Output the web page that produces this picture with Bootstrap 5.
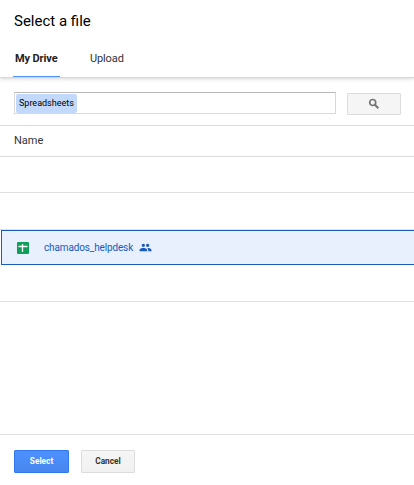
<!DOCTYPE html>
<html lang="en">
<head>
<meta charset="utf-8">
<meta name="viewport" content="width=device-width, initial-scale=1">
<title>Select a file</title>
<link href="https://cdn.jsdelivr.net/npm/bootstrap@5.3.0/dist/css/bootstrap.min.css" rel="stylesheet">
<style>
body{font-family:Roboto,"Liberation Sans",sans-serif;font-size:11px;color:#333;height:485px}
.picker-head{height:78px;border-bottom:1px solid #d6d6d6;box-shadow:0 1px 4px rgba(0,0,0,.16)}
.picker-title{font-size:15px;line-height:20px;color:#000;padding:11px 14px 0;margin:0;font-weight:400}
.picker-tabs{padding-left:13px;gap:27px;height:32px}
.picker-tabs .nav-link{font-size:11px;line-height:16px;padding:6px 3px 0;color:#333;border-bottom:1px solid transparent;height:32px;letter-spacing:-.12px}
.picker-tabs .nav-link.active{font-weight:700;color:#222;border-color:#4d90fe;width:47px;white-space:nowrap;padding-left:2px}
.search-row{height:48px;padding:14px 13px 0 14px;gap:11px;border-bottom:1px solid #dcdcdc}
.query-box{width:322px;height:22px;border:1px solid #d9d9d9;border-top-color:#b9b9b9;padding:1px}
.query-chip{font-size:9px;line-height:19px;height:19px;width:61px;background:#c3d9fb;color:#000;border-radius:2px;white-space:nowrap;padding-left:3px}
.search-btn{width:54px;height:22px;margin-top:1px;background:#f5f5f5;border:1px solid #dcdcdc;border-radius:1px}
.col-head{height:31px;border-bottom:1px solid #dcdcdc;padding:0 14px;line-height:29px}
.file-row{height:36px;border-bottom:1px solid #dfdfdf}
.file-row.tall{height:37px}
.file-row.picked{height:35px;background:#e8f0fe;border:1px solid #1a5bbd;border-right:0;margin-left:1px;color:#185abc;font-size:10px;padding-left:15px}
.file-name{margin-left:15px;width:89px;white-space:nowrap;letter-spacing:-.14px}
.shared{margin-left:6px}
.picker-foot{height:51px;border-top:1px solid #dfdfdf;padding:15px 14px 0;gap:12px}
.foot-btn{height:23px;font-size:8.3px;font-weight:700;line-height:21px;padding:0;border-radius:1px}
.foot-btn.choose{width:55px;color:#fff;background:linear-gradient(#4d90fe,#4787ed);border:1px solid #3079ed}
.foot-btn.dismiss{width:54px;color:#333;background:linear-gradient(#f5f5f5,#f1f1f1);border:1px solid #dcdcdc}
</style>
</head>
<body class="bg-white d-flex flex-column overflow-hidden">
<header class="picker-head d-flex flex-column justify-content-between flex-shrink-0">
  <h1 class="picker-title">Select a file</h1>
  <nav class="nav picker-tabs flex-nowrap">
    <a class="nav-link active" href="#">My Drive</a>
    <a class="nav-link" href="#">Upload</a>
  </nav>
</header>
<main class="flex-grow-1">
  <div class="search-row d-flex align-items-start">
    <div class="query-box"><div class="query-chip">Spreadsheets</div></div>
    <button class="search-btn d-flex align-items-center justify-content-center p-0" type="button" aria-label="Search">
      <svg width="12" height="12" viewBox="0 0 12 12" fill="none" stroke="#777"><circle cx="4.700" cy="4.500" r="3" stroke-width="1.700"/><path d="M6.900 6.700l3.500 3.500" stroke-width="2.100"/></svg>
    </button>
  </div>
  <div class="col-head">Name</div>
  <div class="file-row"></div>
  <div class="file-row tall"></div>
  <div class="file-row picked d-flex align-items-center">
    <svg width="12" height="12" viewBox="0 0 12 12"><rect width="12" height="12" rx="1" fill="#0f9d58"/><path d="M1.500 4.500h9M5.500 2v8" stroke="#fff" stroke-width="1.3"/></svg>
    <span class="file-name">chamados_helpdesk</span>
    <svg class="shared" width="13" height="13" viewBox="0 0 24 24" fill="#185abc"><path d="M16 11c1.660 0 2.990-1.340 2.990-3S17.660 5 16 5s-3 1.340-3 3 1.340 3 3 3zm-8 0c1.660 0 2.990-1.340 2.990-3S9.660 5 8 5 5 6.340 5 8s1.340 3 3 3zm0 2c-2.330 0-7 1.170-7 3.500V19h14v-2.500c0-2.330-4.670-3.500-7-3.500zm8 0c-.29 0-.62.02-.97.05 1.160.840 1.970 1.970 1.970 3.450V19h6v-2.500c0-2.330-4.670-3.500-7-3.500z"/></svg>
  </div>
  <div class="file-row tall"></div>
</main>
<footer class="picker-foot d-flex align-items-start flex-shrink-0">
  <button class="foot-btn choose" type="button">Select</button>
  <button class="foot-btn dismiss" type="button">Cancel</button>
</footer>
<script src="https://cdn.jsdelivr.net/npm/bootstrap@5.3.0/dist/js/bootstrap.bundle.min.js"></script>
</body>
</html>
